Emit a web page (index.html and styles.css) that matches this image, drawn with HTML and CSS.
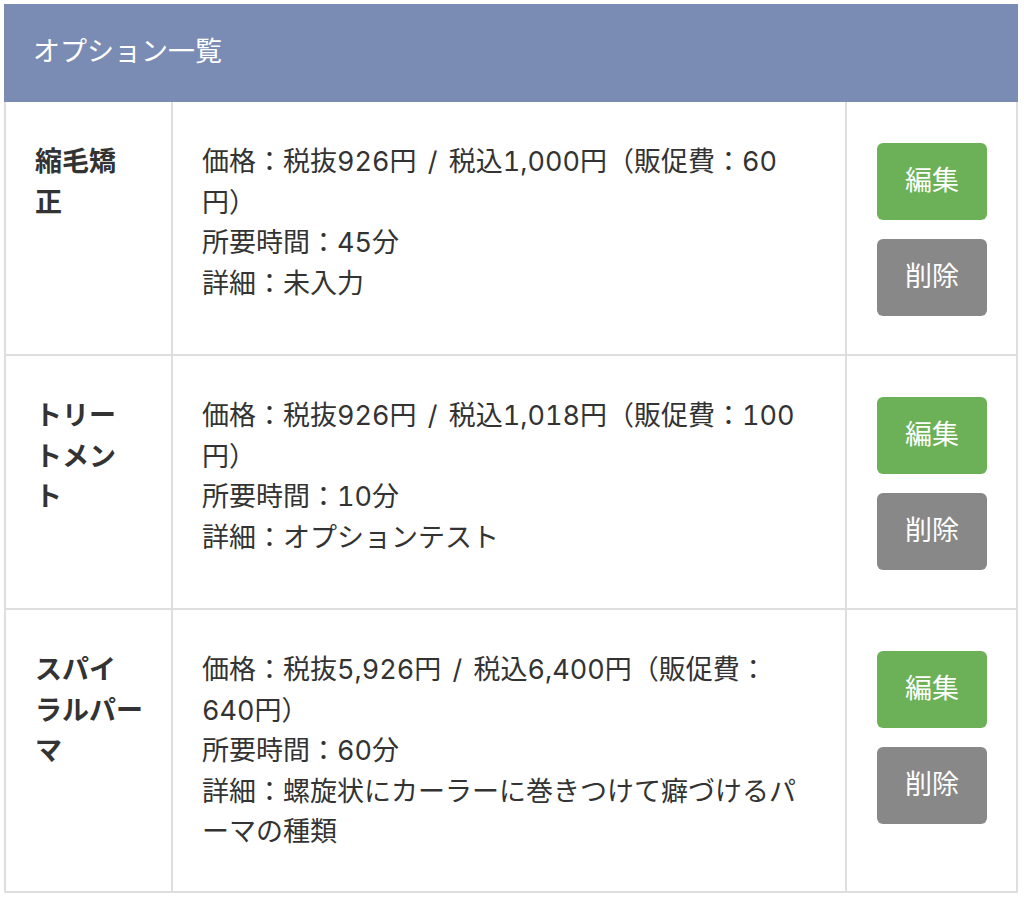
FILE: index.html
```html
<!DOCTYPE html>
<html lang="ja">
<head>
<meta charset="utf-8">
<title>オプション一覧</title>
<link rel="stylesheet" href="styles.css">
</head>
<body>
<div class="panel">
  <div class="panel-head">オプション一覧</div>
  <div class="list">
    <div class="row">
      <div class="cell name">縮毛矯正</div>
      <div class="cell info">
        <div>価格：税抜926円 / 税込1,000円（販促費：60円）</div>
        <div>所要時間：45分</div>
        <div>詳細：未入力</div>
      </div>
      <div class="cell actions">
        <button class="btn btn-edit">編集</button>
        <button class="btn btn-del">削除</button>
      </div>
    </div>
    <div class="row">
      <div class="cell name">トリートメント</div>
      <div class="cell info">
        <div>価格：税抜926円 / 税込1,018円（販促費：100円）</div>
        <div>所要時間：10分</div>
        <div>詳細：オプションテスト</div>
      </div>
      <div class="cell actions">
        <button class="btn btn-edit">編集</button>
        <button class="btn btn-del">削除</button>
      </div>
    </div>
    <div class="row">
      <div class="cell name">スパイ<span class="keep">ラルパー</span>マ</div>
      <div class="cell info">
        <div>価格：税抜5,926円 / 税込6,400円（販促費：640円）</div>
        <div>所要時間：60分</div>
        <div>詳細：螺旋状にカーラーに巻きつけて癖づけるパーマの種類</div>
      </div>
      <div class="cell actions">
        <button class="btn btn-edit">編集</button>
        <button class="btn btn-del">削除</button>
      </div>
    </div>
  </div>
</div>
</body>
</html>
```

FILE: styles.css
```css
* { box-sizing: border-box; }
html, body { margin: 0; padding: 0; background: #fff; }
body {
  font-family: "Inter", "Noto Sans CJK JP", sans-serif;
  font-size: 27px;
  line-height: 1.5;
  color: #333;
}
.panel {
  margin: 4px 6px 0 4px;
  width: 1014px;
}
.panel-head {
  height: 98px;
  background: #7a8cb4;
  color: #fff;
  padding: 28px 29px;
  font-size: 27px;
  line-height: 40.5px;
}
.list {
  border-left: 2px solid #dedede;
  border-right: 2px solid #dedede;
}
.row {
  display: grid;
  grid-template-columns: 167px 674px 1fr;
  border-bottom: 2px solid #dedede;
}
.cell {
  padding: 40px 29px;
  line-height: 40.5px;
}
.name {
  border-right: 2px solid #dedede;
  font-weight: bold;
  padding-right: 30px;
}
.keep {
  white-space: nowrap;
}
.info {
  border-right: 2px solid #dedede;
  padding-right: 38px;
  padding-bottom: 38px;
  word-spacing: 4px;
  font-variant-numeric: tabular-nums;
}
.actions {
  display: flex;
  flex-direction: column;
  gap: 19px;
  padding: 41px 29px 38px 30px;
}
.btn {
  display: block;
  width: 110px;
  height: 77px;
  border: none;
  border-radius: 6px;
  color: #fff;
  font-family: inherit;
  font-size: 27px;
  line-height: 40.5px;
  padding: 0;
  cursor: pointer;
}
.btn-edit { background: #6cb158; }
.btn-del { background: #888888; }
```
